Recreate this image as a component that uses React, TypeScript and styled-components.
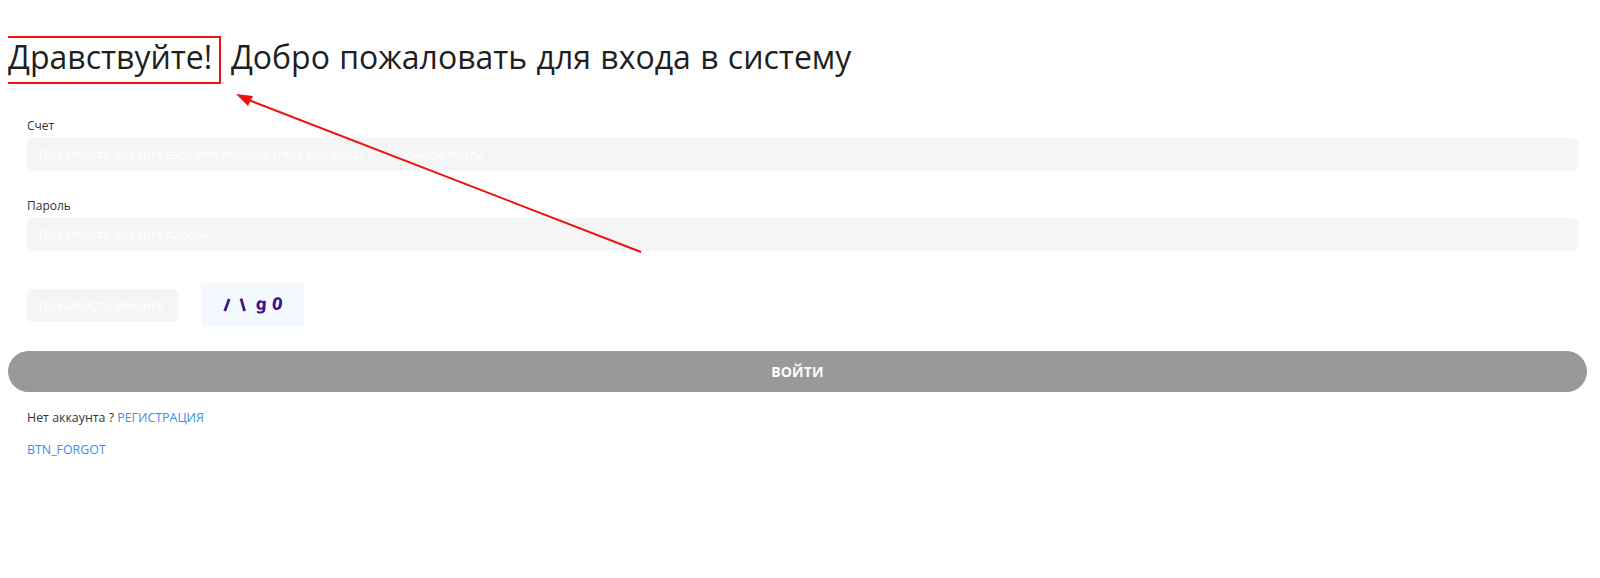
import React from "react";
import styled, { createGlobalStyle } from "styled-components";

const GlobalStyle = createGlobalStyle`
  html, body {
    overflow: hidden;
  }
  body {
    margin: 8px;
    background: #fff;
    font-family: "Open Sans", "Noto Sans", "Liberation Sans", sans-serif;
    color: #333;
  }
`;

const Page = styled.div`
  position: relative;
  width: 1579px;
  padding-top: 28px;
`;

const Title = styled.h1`
  margin: 0;
  font-size: 32px;
  font-weight: 400;
  line-height: 42px;
  color: #1f1f1f;
  word-spacing: 1px;
`;

const Form = styled.form`
  display: flex;
  flex-direction: column;
  margin: 40px 9px 0 19px;
`;

const Field = styled.div`
  display: flex;
  flex-direction: column;
  margin-bottom: 27px;
`;

const Label = styled.label`
  font-size: 12px;
  line-height: 16px;
  color: #333;
  margin-bottom: 4px;
`;

const Input = styled.input<{ $width?: number }>`
  box-sizing: border-box;
  width: ${(p) => (p.$width ? `${p.$width}px` : "100%")};
  height: 33px;
  border: none;
  border-radius: 5px;
  background: #f5f5f5;
  padding: 0 12px;
  font-family: inherit;
  font-size: 12px;
  outline: none;
  &::placeholder {
    color: #ffffff;
  }
`;

const CaptchaRow = styled.div`
  display: flex;
  align-items: center;
  gap: 23px;
  margin-top: 5px;
`;

const CaptchaImage = styled.div`
  width: 103px;
  height: 44px;
  background: #f3f9ff;
  display: flex;
  align-items: center;
  justify-content: center;
`;

const LoginButton = styled.button`
  display: block;
  width: 100%;
  height: 41px;
  margin: 24px 0 0 0;
  border: none;
  border-radius: 21px;
  background: #999999;
  color: #fff;
  font-family: inherit;
  font-size: 14px;
  font-weight: 700;
  letter-spacing: 0.2px;
`;

const Links = styled.div`
  display: flex;
  flex-direction: column;
  gap: 15px;
  margin: 17px 0 0 19px;
  font-size: 12.4px;
  line-height: 17px;
  color: #333;
`;

const LinkText = styled.a`
  color: #3a8ee6;
  text-decoration: none;
`;

const Highlight = styled.span`
  position: absolute;
  left: -4px;
  top: 28px;
  width: 213px;
  height: 44px;
  border: 2px solid #ee1111;
  pointer-events: none;
`;

const Annotation = styled.svg`
  position: absolute;
  left: 0;
  top: 0;
  pointer-events: none;
`;

const Captcha = () => (
  <svg width="70" height="30" viewBox="0 0 70 30">
    <g fill="#40108c" fontFamily="'DejaVu Sans Condensed', 'DejaVu Sans', sans-serif" fontWeight="700" fontSize="17">
      <text x="6" y="22" transform="rotate(20 10 16)">l</text>
      <text x="22" y="21" transform="rotate(-16 26 14)">l</text>
      <text x="38" y="20" transform="rotate(4 45 14)">g</text>
      <text x="54" y="20" transform="rotate(10 61 14)">0</text>
    </g>
  </svg>
);

export default function App() {
  return (
    <>
      <GlobalStyle />
      <Page>
        <Title>Дравствуйте!&nbsp; Добро пожаловать для входа в систему</Title>
        <Form onSubmit={(e) => e.preventDefault()}>
          <Field>
            <Label>Счет</Label>
            <Input placeholder="Пожалуйста, введите свое имя пользователя или адрес электронной почты" />
          </Field>
          <Field>
            <Label>Пароль</Label>
            <Input type="password" placeholder="Пожалуйста, введите пароль" />
          </Field>
          <CaptchaRow>
            <Input $width={151} placeholder="Пожалуйста, введите проверочный код" />
            <CaptchaImage>
              <Captcha />
            </CaptchaImage>
          </CaptchaRow>
        </Form>
        <LoginButton>ВОЙТИ</LoginButton>
        <Links>
          <span>
            Нет аккаунта ? <LinkText href="#">РЕГИСТРАЦИЯ</LinkText>
          </span>
          <LinkText href="#">BTN_FORGOT</LinkText>
        </Links>
        <Highlight />
        <Annotation width="700" height="260">
          <line x1="633" y1="244" x2="238" y2="91" stroke="#ee1111" strokeWidth="2" />
          <polygon points="228,86 245,88 240,98" fill="#ee1111" />
        </Annotation>
      </Page>
    </>
  );
}
